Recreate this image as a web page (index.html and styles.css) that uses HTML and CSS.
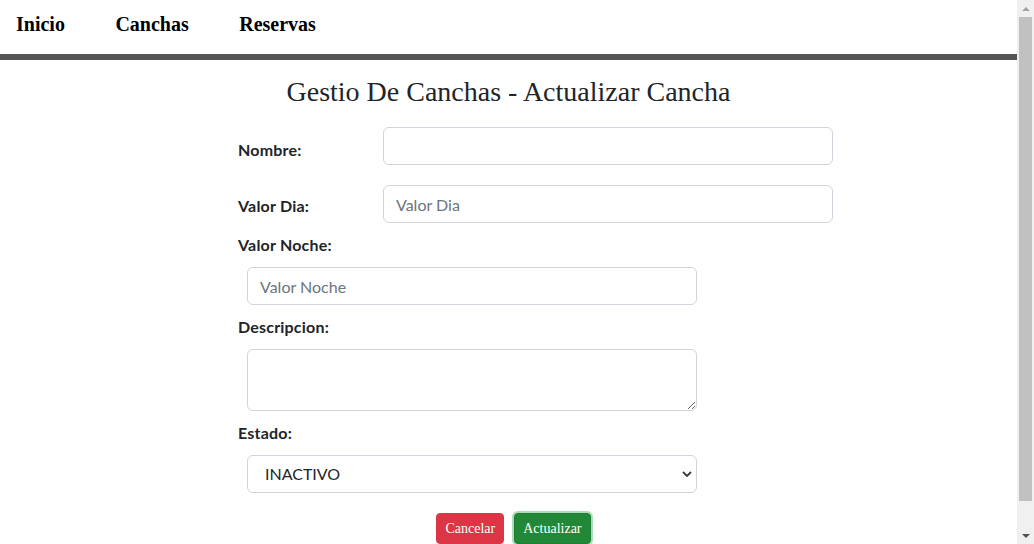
FILE: index.html
```html
<!DOCTYPE html>
<html lang="es">
<head>
<meta charset="utf-8">
<title>Gestio De Canchas - Actualizar Cancha</title>
<link rel="stylesheet" href="styles.css">
</head>
<body>
<div class="window">
  <div class="viewport">
    <nav class="topnav">
      <a class="nav-link" href="#">Inicio</a>
      <a class="nav-link" href="#">Canchas</a>
      <a class="nav-link" href="#">Reservas</a>
    </nav>
    <main class="page">
      <h1 class="title">Gestio De Canchas - Actualizar Cancha</h1>
      <form class="form">
        <div class="row-inline row-first">
          <label class="lbl" for="nombre">Nombre:</label>
          <input class="ctl" id="nombre" type="text">
        </div>
        <div class="row-inline row-second">
          <label class="lbl" for="valordia">Valor Dia:</label>
          <input class="ctl" id="valordia" type="text" placeholder="Valor Dia">
        </div>
        <div class="group">
          <label class="lbl" for="valornoche">Valor Noche:</label>
          <input class="ctl indent" id="valornoche" type="text" placeholder="Valor Noche">
        </div>
        <div class="group">
          <label class="lbl" for="desc">Descripcion:</label>
          <textarea class="ctl indent area" id="desc" rows="2"></textarea>
        </div>
        <div class="group">
          <label class="lbl" for="estado">Estado:</label>
          <div class="select-wrap indent">
            <select class="ctl sel" id="estado">
              <option>INACTIVO</option>
              <option>ACTIVO</option>
            </select>
            <svg class="chev" width="10" height="6" viewBox="0 0 10 6"><path d="M1 1 L5 5 L9 1" fill="none" stroke="#3a3a3a" stroke-width="1.8"/></svg>
          </div>
        </div>
        <div class="actions">
          <button type="button" class="btn btn-danger">Cancelar</button>
          <button type="submit" class="btn btn-success">Actualizar</button>
        </div>
      </form>
    </main>
  </div>
  <div class="scrollbar" aria-hidden="true">
    <div class="sb-btn"><span class="arrow-up"></span></div>
    <div class="sb-track"><div class="sb-thumb"></div></div>
    <div class="sb-btn"><span class="arrow-down"></span></div>
  </div>
</div>
</body>
</html>
```
FILE: styles.css
```css
html, body {
  margin: 0;
  height: 100%;
  overflow: hidden;
}

body {
  font-family: "Liberation Serif", "Times New Roman", serif;
  color: #000;
  background: #fff;
}

.window {
  display: flex;
  height: 100%;
}

.viewport {
  flex: 1;
  min-width: 0;
  overflow: hidden;
}

/* fake classic scrollbar */
.scrollbar {
  width: 17px;
  flex: none;
  display: flex;
  flex-direction: column;
  background: #f0f0f0;
}
.sb-btn {
  height: 17px;
  flex: none;
  display: flex;
  align-items: center;
  justify-content: center;
}
.arrow-up {
  width: 0;
  height: 0;
  border-left: 4px solid transparent;
  border-right: 4px solid transparent;
  border-bottom: 4px solid #a3a3a3;
}
.arrow-down {
  width: 0;
  height: 0;
  border-left: 4px solid transparent;
  border-right: 4px solid transparent;
  border-top: 4px solid #505050;
}
.sb-track {
  flex: 1;
  padding: 0 2px;
}
.sb-thumb {
  height: 484px;
  background: #c1c1c1;
}

.topnav {
  display: flex;
  align-items: flex-start;
  gap: 50.5px;
  height: 41px;
  padding: 13px 16px 0;
  border-bottom: 6px solid #555;
}

.nav-link {
  font-size: 20px;
  font-weight: bold;
  color: #000;
  text-decoration: none;
  line-height: normal;
}

.title {
  margin: 16px 0 19px;
  font-size: 28px;
  font-weight: normal;
  line-height: 32px;
  text-align: center;
  color: #212529;
}

.form {
  display: flex;
  flex-direction: column;
  width: 551px;
  margin-left: 238px;
  font-family: Lato, "Open Sans", sans-serif;
}

.lbl {
  display: block;
  font-size: 16px;
  font-weight: bold;
  line-height: 24px;
  letter-spacing: 0.2px;
  color: #212529;
}

.row-inline {
  display: grid;
  grid-template-columns: 145px 450px;
  align-items: start;
}

.row-first {
  margin-bottom: 20px;
}
.row-first .lbl {
  margin-top: 11px;
}

.row-second {
  margin-bottom: 10px;
}
.row-second .lbl {
  margin-top: 9px;
}

.group {
  display: flex;
  flex-direction: column;
  margin-bottom: 10px;
}

.group .lbl {
  margin-bottom: 10px;
}

.ctl {
  display: block;
  box-sizing: border-box;
  width: 450px;
  height: 38px;
  padding: 6px 12px;
  border: 1px solid #ced4da;
  border-radius: 6px;
  background: #fff;
  font-family: Lato, "Open Sans", sans-serif;
  font-size: 16px;
  line-height: 24px;
  color: #212529;
  margin: 0;
}

.ctl::placeholder {
  color: #6c757d;
}

.indent {
  margin-left: 9px;
}

.area {
  height: 62px;
}

.select-wrap {
  position: relative;
  width: 450px;
}

.sel {
  -webkit-appearance: none;
  appearance: none;
  padding-left: 17px;
}

.chev {
  position: absolute;
  right: 5px;
  top: 16px;
}

.actions {
  display: flex;
  justify-content: center;
  gap: 10px;
  margin-top: 10px;
}

.btn {
  box-sizing: border-box;
  height: 31px;
  padding: 4px 8px;
  border: 1px solid transparent;
  border-radius: 4px;
  font-family: "Liberation Serif", "Times New Roman", serif;
  font-size: 14px;
  line-height: 21px;
  color: #fff;
  cursor: pointer;
}

.btn-danger {
  background: #dc3545;
  border-color: #dc3545;
}

.btn-success {
  background: #218838;
  border-color: #1e7e34;
  box-shadow: 0 0 0 2px rgba(72, 180, 97, 0.45);
}
```
